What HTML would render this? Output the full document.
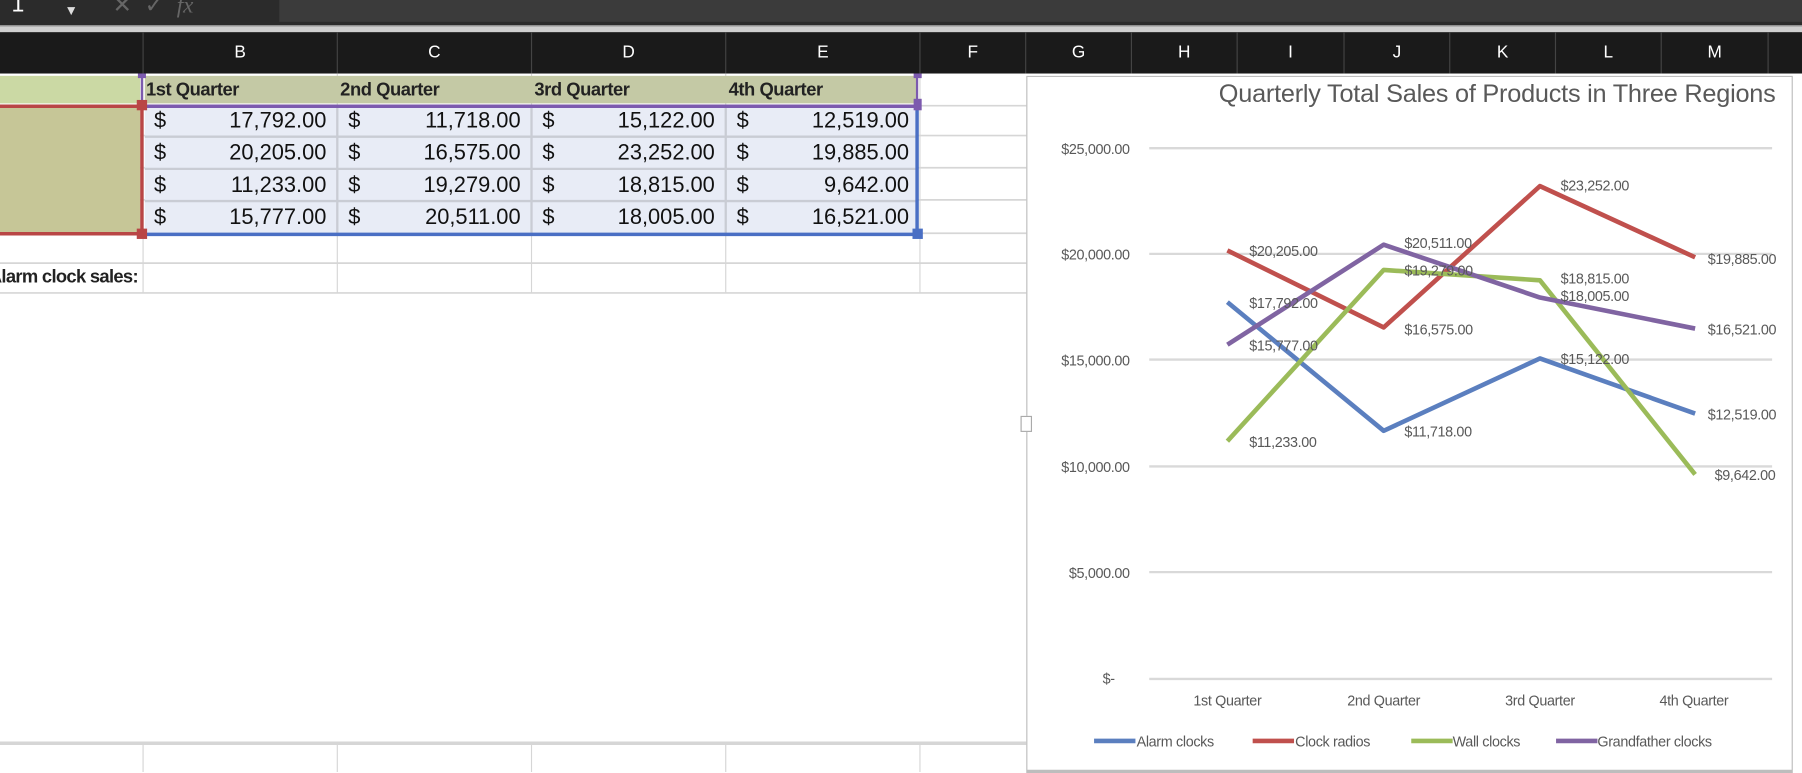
<!DOCTYPE html>
<html><head><meta charset="utf-8"><style>
html,body{margin:0;padding:0;width:1802px;height:772px;overflow:hidden;background:#fff}
#w{position:absolute;left:0;top:0;width:1568px;height:672px;transform:scale(1.14923,1.14881);transform-origin:0 0;font-family:"Liberation Sans",sans-serif}
.a{position:absolute}
.n{font-family:"Liberation Sans Narrow","Liberation Sans",sans-serif}
.hd{position:absolute;top:28px;height:36px;color:#fff;font-size:15px;line-height:36px;text-align:center;border-left:1px solid #444;box-sizing:border-box}
.cell{position:absolute;font-size:19px;color:#111;line-height:26px}
</style></head><body><div id="w">
<div class="a" style="left:0;top:0;width:1568px;height:22px;background:#2b2b2b"></div>
<div class="a" style="left:243px;top:0;width:1325px;height:19px;background:#3b3b3b"></div>
<div class="a" style="left:0;top:22px;width:1568px;height:6px;background:#cfcfcf;border-top:1px solid #888"></div>
<div class="a" style="left:10px;top:-7px;color:#fff;font-size:20px">1</div>
<div class="a" style="left:56px;top:2px;color:#ddd;font-size:12px">▼</div>
<div class="a" style="left:98px;top:-8px;color:#666;font-size:20px">✕&nbsp;&nbsp;✓&nbsp;&nbsp;<i style="font-family:'Liberation Serif',serif">fx</i></div>
<div class="a" style="left:0;top:28px;width:1568px;height:36px;background:#1a1a1a"></div>
<div class="hd" style="left:124px;width:169px">B</div>
<div class="hd" style="left:293px;width:169px">C</div>
<div class="hd" style="left:462px;width:169px">D</div>
<div class="hd" style="left:631px;width:169px">E</div>
<div class="hd" style="left:800px;width:92px">F</div>
<div class="hd" style="left:892px;width:92px">G</div>
<div class="hd" style="left:984px;width:92px">H</div>
<div class="hd" style="left:1076px;width:93px">I</div>
<div class="hd" style="left:1169px;width:92px">J</div>
<div class="hd" style="left:1261px;width:92px">K</div>
<div class="hd" style="left:1353px;width:92px">L</div>
<div class="hd" style="left:1445px;width:93px">M</div>
<div class="hd" style="left:1538px;width:30px"></div>
<svg class="a" style="left:0;top:64px" width="900" height="608">
<g stroke="#d6d6d6" stroke-width="1.5">
<line x1="0" y1="28" x2="900" y2="28"/><line x1="0" y1="54" x2="900" y2="54"/><line x1="0" y1="82" x2="900" y2="82"/><line x1="0" y1="110" x2="900" y2="110"/><line x1="0" y1="139" x2="900" y2="139"/><line x1="0" y1="165" x2="900" y2="165"/><line x1="0" y1="191" x2="900" y2="191"/>
<line x1="0" y1="583" x2="900" y2="583" stroke-width="3"/>
<g stroke-width="1"><line x1="124.5" y1="0" x2="124.5" y2="191"/><line x1="293.5" y1="0" x2="293.5" y2="191"/><line x1="462.5" y1="0" x2="462.5" y2="191"/><line x1="631.5" y1="0" x2="631.5" y2="191"/><line x1="800.5" y1="0" x2="800.5" y2="191"/>
<line x1="124.5" y1="584" x2="124.5" y2="608"/><line x1="293.5" y1="584" x2="293.5" y2="608"/><line x1="462.5" y1="584" x2="462.5" y2="608"/><line x1="631.5" y1="584" x2="631.5" y2="608"/><line x1="800.5" y1="584" x2="800.5" y2="608"/></g>
</g>
<rect x="0" y="2" width="122" height="24" fill="#cbd9a4"/>
<rect x="0" y="30" width="122" height="109" fill="#c6c697"/>
<rect x="126" y="2" width="672" height="24" fill="#c4c9a5"/>
<rect x="126" y="30" width="672" height="109" fill="#e8ecf6"/>
<g stroke="#c9ccd4" stroke-width="2"><line x1="126" y1="55" x2="798" y2="55"/><line x1="126" y1="83" x2="798" y2="83"/><line x1="126" y1="111" x2="798" y2="111"/><line x1="293.5" y1="30" x2="293.5" y2="139"/><line x1="462.5" y1="30" x2="462.5" y2="139"/><line x1="631.5" y1="30" x2="631.5" y2="139"/></g>
<g fill="none" stroke-width="3"><path d="M0 28.5H123.5V139.5H0" stroke="#b94646"/><path d="M124 28.5H798" stroke="#7c5aae"/><path d="M123.5 2V26M798 2V26" stroke="#7c5aae" stroke-width="2"/><path d="M126 140H798V30" stroke="#4a6fc4"/></g>
<g fill="#7c5aae"><rect x="120" y="-1" width="7" height="5"/><rect x="795" y="-1" width="7" height="5"/><rect x="795" y="22" width="7" height="10"/></g>
<g fill="#b94646"><rect x="119" y="23" width="9" height="9"/><rect x="119" y="135" width="9" height="9"/></g>
<rect x="794" y="135" width="9" height="9" fill="#4a6fc4"/>
</svg>
<div class="a n" style="left:127px;top:67px;font-size:16px;font-weight:bold;color:#222;line-height:24px;letter-spacing:-0.4px">
<span class="a" style="left:0;white-space:nowrap">1st&nbsp;Quarter</span><span class="a" style="left:169px;white-space:nowrap">2nd&nbsp;Quarter</span><span class="a" style="left:338px;white-space:nowrap">3rd&nbsp;Quarter</span><span class="a" style="left:507px;white-space:nowrap">4th&nbsp;Quarter</span></div>
<div class="a" style="left:0;top:230px;width:122px;height:24px;overflow:hidden"><span class="a n" style="right:2px;top:0;font-size:16px;font-weight:bold;color:#222;line-height:24px;white-space:nowrap;letter-spacing:-0.6px">Alarm clock sales:</span></div>
<div id="data"></div>
<script>
var v=[["17,792.00","11,718.00","15,122.00","12,519.00"],["20,205.00","16,575.00","23,252.00","19,885.00"],["11,233.00","19,279.00","18,815.00","9,642.00"],["15,777.00","20,511.00","18,005.00","16,521.00"]];
var h="";for(var r=0;r<4;r++)for(var c=0;c<4;c++){var x=124+c*169,y=93+r*28;h+='<div class="cell" style="left:'+(x+10)+'px;top:'+y+'px">$</div><div class="cell" style="left:'+x+'px;width:'+(169-9)+'px;text-align:right;top:'+y+'px">'+v[r][c]+'</div>';}
document.getElementById("data").innerHTML=h;
</script>
<div class="a" style="left:893px;top:66px;width:665px;height:603px;border:1.5px solid #bdbdbd;border-bottom:3px solid #bdbdbd;background:#fff"></div>
<div class="a n" style="left:900px;top:66px;width:645px;text-align:right;font-size:22px;color:#595959;line-height:32px;letter-spacing:-0.2px">Quarterly Total Sales of Products in Three Regions</div>
<svg class="a n" style="left:893px;top:66px" width="675" height="606" font-family="Liberation Sans Narrow, Liberation Sans, sans-serif" font-size="12.5" letter-spacing="-0.3" fill="#595959">
<g transform="translate(-893,-66)">
<g stroke="#d9d9d9" stroke-width="2"><line x1="1000" y1="129" x2="1542" y2="129"/><line x1="1000" y1="221" x2="1542" y2="221"/><line x1="1000" y1="313" x2="1542" y2="313"/><line x1="1000" y1="406" x2="1542" y2="406"/><line x1="1000" y1="498" x2="1542" y2="498"/><line x1="1000" y1="591" x2="1542" y2="591"/></g>
<g text-anchor="end"><text x="983" y="134">$25,000.00</text><text x="983" y="226">$20,000.00</text><text x="983" y="318">$15,000.00</text><text x="983" y="411">$10,000.00</text><text x="983" y="503">$5,000.00</text><text x="970" y="595">$-</text></g>
<g text-anchor="middle"><text x="1068" y="614">1st Quarter</text><text x="1204" y="614">2nd Quarter</text><text x="1340" y="614">3rd Quarter</text><text x="1474" y="614">4th Quarter</text></g>
<g fill="none" stroke-width="4" stroke-linejoin="round">
<polyline stroke="#5b7fbf" points="1068,263 1204,375 1340,312 1475,360"/>
<polyline stroke="#c0504d" points="1068,218 1204,285 1340,162 1475,224"/>
<polyline stroke="#9bbb59" points="1068,384 1204,235 1340,244 1475,413"/>
<polyline stroke="#8064a2" points="1068,300 1204,213 1340,259 1475,286"/>
</g>
<text x="1087" y="223">$20,205.00</text><text x="1087" y="268">$17,792.00</text><text x="1087" y="305">$15,777.00</text><text x="1087" y="389">$11,233.00</text>
<text x="1222" y="216">$20,511.00</text><text x="1222" y="240">$19,279.00</text><text x="1222" y="291">$16,575.00</text><text x="1222" y="380">$11,718.00</text>
<text x="1358" y="166">$23,252.00</text><text x="1358" y="247">$18,815.00</text><text x="1358" y="262">$18,005.00</text><text x="1358" y="317">$15,122.00</text>
<text x="1486" y="230">$19,885.00</text><text x="1486" y="291">$16,521.00</text><text x="1486" y="365">$12,519.00</text><text x="1492" y="418">$9,642.00</text>
<g stroke-width="4"><line x1="952" y1="645" x2="988" y2="645" stroke="#5b7fbf"/><line x1="1090" y1="645" x2="1126" y2="645" stroke="#c0504d"/><line x1="1228" y1="645" x2="1264" y2="645" stroke="#9bbb59"/><line x1="1354" y1="645" x2="1390" y2="645" stroke="#8064a2"/></g>
<text x="989" y="650">Alarm clocks</text><text x="1127" y="650">Clock radios</text><text x="1264" y="650">Wall clocks</text><text x="1390" y="650">Grandfather clocks</text>
</g></svg>
<div class="a" style="left:888px;top:362px;width:8px;height:12px;background:#fff;border:1px solid #aaa"></div>
</div></body></html>
